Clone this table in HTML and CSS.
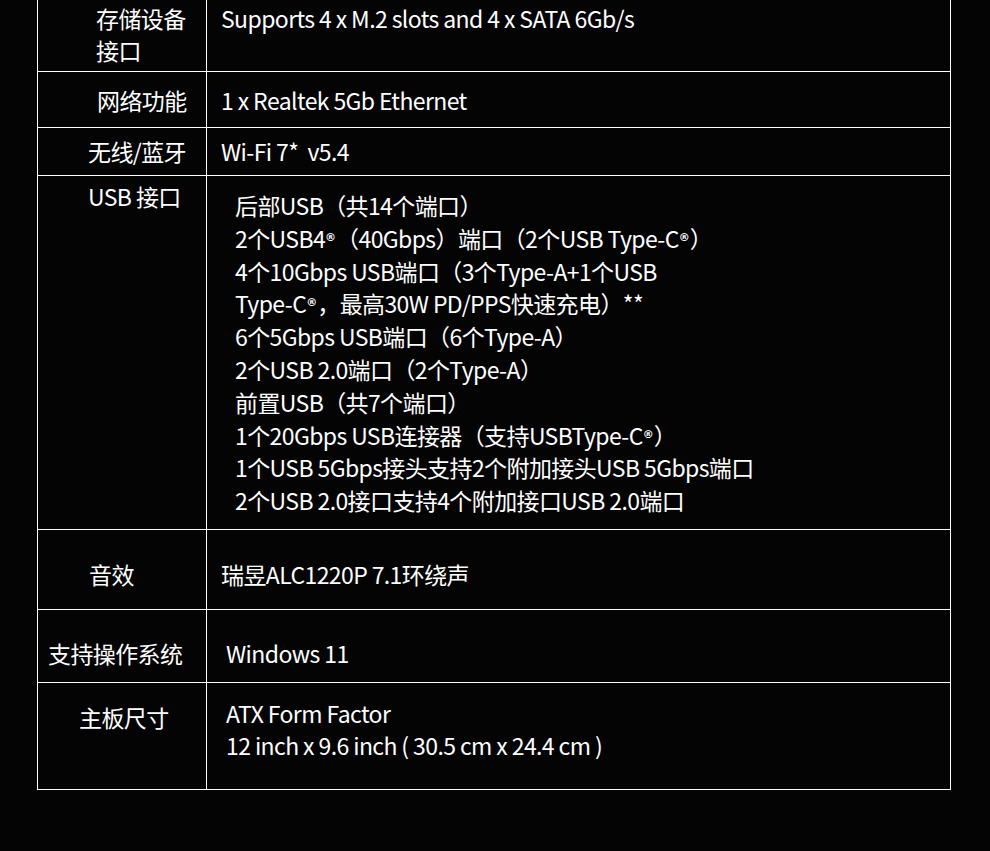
FILE: index.html
```html
<!DOCTYPE html>
<html lang="zh-CN">
<head>
<meta charset="utf-8">
<title>规格</title>
<link rel="stylesheet" href="styles.css">
</head>
<body>
<div class="spec">
  <div class="row r1">
    <div class="label">存储设备<br>接口</div>
    <div class="value">Supports 4 x M.2 slots and 4 x SATA 6Gb/s</div>
  </div>
  <div class="row r2">
    <div class="label">网络功能</div>
    <div class="value">1 x Realtek 5Gb Ethernet</div>
  </div>
  <div class="row r3">
    <div class="label">无线/蓝牙</div>
    <div class="value">Wi-Fi 7*&nbsp; v5.4</div>
  </div>
  <div class="row r4">
    <div class="label">USB 接口</div>
    <div class="value">
      <div>后部USB（共14个端口）</div>
      <div>2个USB4<span class="reg">®</span>（40Gbps）端口（2个USB Type-C<span class="reg">®</span>）</div>
      <div>4个10Gbps USB端口（3个Type-A+1个USB</div>
      <div>Type-C<span class="reg">®</span>，最高30W PD/PPS快速充电）**</div>
      <div>6个5Gbps USB端口（6个Type-A）</div>
      <div>2个USB 2.0端口（2个Type-A）</div>
      <div>前置USB（共7个端口）</div>
      <div>1个20Gbps USB连接器（支持USBType-C<span class="reg">®</span>）</div>
      <div>1个USB 5Gbps接头支持2个附加接头USB 5Gbps端口</div>
      <div>2个USB 2.0接口支持4个附加接口USB 2.0端口</div>
    </div>
  </div>
  <div class="row r5">
    <div class="label">音效</div>
    <div class="value">瑞昱ALC1220P 7.1环绕声</div>
  </div>
  <div class="row r6">
    <div class="label">支持操作系统</div>
    <div class="value">Windows 11</div>
  </div>
  <div class="row r7">
    <div class="label">主板尺寸</div>
    <div class="value">ATX Form Factor<br>12 inch x 9.6 inch ( 30.5 cm x 24.4 cm )</div>
  </div>
</div>
</body>
</html>
```

FILE: styles.css
```css
html, body {
  margin: 0;
  padding: 0;
  background: #040404;
}

body {
  color: #ffffff;
  font-family: "Noto Sans CJK SC", "Noto Sans", sans-serif;
  font-size: 23px;
  letter-spacing: -0.6px;
  line-height: 32px;
  overflow: hidden;
  height: 851px;
}

.spec {
  margin: -6px 0 0 37px;
  width: 914px;
  box-sizing: border-box;
  border: 1px solid #ffffff;
}

.row {
  display: grid;
  grid-template-columns: 169px 1fr;
  border-bottom: 1px solid #ffffff;
}

.row:last-child {
  border-bottom: none;
}

.label {
  border-right: 1px solid #ffffff;
  box-sizing: border-box;
  white-space: nowrap;
}

.value {
  padding-left: 14px;
  white-space: nowrap;
}

.reg {
  font-family: "DejaVu Sans", sans-serif;
  font-size: 11px;
  font-weight: 700;
  letter-spacing: 0;
  line-height: 0;
  vertical-align: 7px;
}

/* row 1 */
.r1 .label, .r1 .value { padding-top: 7px; padding-bottom: 5px; }
.r1 .label { padding-left: 58px; }

/* row 2 */
.r2 .label, .r2 .value { padding-top: 12px; padding-bottom: 11px; }
.r2 .label { padding-left: 59px; }

/* row 3 */
.r3 .label, .r3 .value { padding-top: 7px; padding-bottom: 8px; }
.r3 .label { padding-left: 50px; }

/* row 4 */
.r4 .label { padding-top: 4px; padding-left: 50px; }
.r4 .value {
  padding-top: 13px;
  padding-bottom: 12px;
  padding-left: 28px;
  line-height: 32.8px;
}

/* row 5 */
.r5 .label, .r5 .value { padding-top: 28px; padding-bottom: 19px; }
.r5 .label { padding-left: 51px; }

/* row 6 */
.r6 .label, .r6 .value { padding-top: 27px; padding-bottom: 13px; }
.r6 .label { padding-left: 10px; }
.r6 .value { padding-left: 19px; }

/* row 7 */
.r7 .label { padding-top: 18px; padding-left: 41px; }
.r7 .value { padding-top: 14px; padding-bottom: 28px; padding-left: 19px; }
```
